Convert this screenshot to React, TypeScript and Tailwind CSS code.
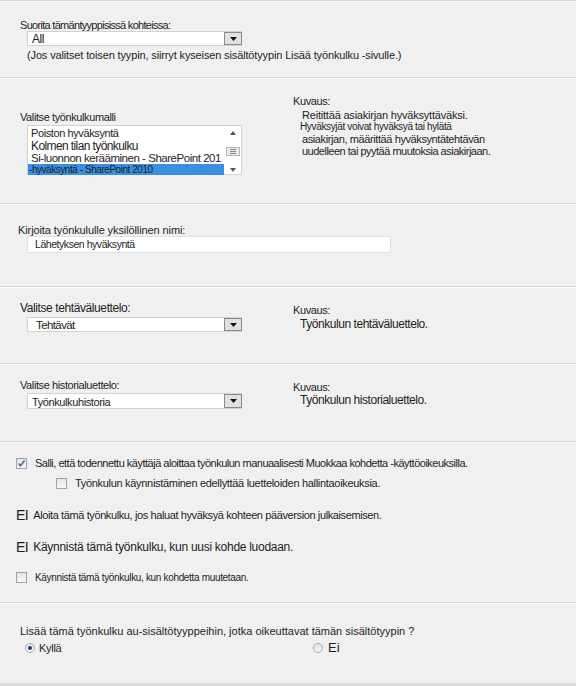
import React from 'react';

const FONT = { fontFamily: '"Liberation Sans", Arial, sans-serif' };

function Arrow() {
  return (
    <div className="flex h-full w-[18px] items-center justify-center border border-[#8a8a8a] bg-[#e1e1e1]">
      <svg width="7" height="4" viewBox="0 0 7 4">
        <path d="M0 0h7L3.5 4z" fill="#111" />
      </svg>
    </div>
  );
}

function Select({ value, textClass, h }: { value: string; textClass: string; h: string }) {
  return (
    <div className={`ml-[7px] flex w-[215px] items-stretch border-l border-t border-b border-[#d2d2d2] bg-white ${h}`}>
      <div className={`flex-1 truncate pl-[4px] text-[#1a1a1a] ${textClass}`}>{value}</div>
      <Arrow />
    </div>
  );
}

function Checkbox({ checked }: { checked?: boolean }) {
  return (
    <span className="flex h-[11px] w-[11px] shrink-0 items-center justify-center border border-[#9aa3ad] bg-gradient-to-b from-[#e6e6e6] to-[#f7f7f7]">
      {checked && (
        <svg width="9" height="9" viewBox="0 0 9 9">
          <path d="M1.5 4.5l2 2.2L7.5 1.5" fill="none" stroke="#4b6a98" strokeWidth="1.6" />
        </svg>
      )}
    </span>
  );
}

function Radio({ checked }: { checked?: boolean }) {
  return (
    <span className="flex h-[10px] w-[10px] shrink-0 items-center justify-center rounded-full border border-[#a4a9b0] bg-gradient-to-b from-[#e2e2e2] to-[#fafafa]">
      {checked && <span className="h-[4px] w-[4px] rounded-full bg-[#1f3f6e]" />}
    </span>
  );
}

function Section({ className, children }: { className: string; children: React.ReactNode }) {
  return (
    <div className={`border-t border-[#d6d6d6] shadow-[inset_0_1px_0_#fbfbfb] ${className}`}>{children}</div>
  );
}

export default function App() {
  return (
    <div className="h-[686px] w-[576px] overflow-hidden bg-[#f0f0f0] text-[#1e1e1e]" style={FONT}>
      {/* content type */}
      <Section className="h-[77px] pl-[20px] pt-[18px]">
        <div className="text-[11px] leading-[12px] tracking-[-0.7px]">Suorita tämäntyyppisissä kohteissa:</div>
        <Select value="All" textClass="text-[12px] leading-[14px] tracking-[-0.4px]" h="h-[15px]" />
        <div className="ml-[7px] mt-[2px] text-[11px] leading-[14px] tracking-[-0.14px]">
          (Jos valitset toisen tyypin, siirryt kyseisen sisältötyypin Lisää työnkulku -sivulle.)
        </div>
      </Section>

      {/* template */}
      <Section className="grid h-[126px] grid-cols-[273px_1fr] pl-[20px]">
        <div className="pt-[33px]">
          <div className="text-[11px] leading-[12px] tracking-[-0.4px]">Valitse työnkulkumalli</div>
          <div className="ml-[7px] mt-[2px] flex h-[50px] w-[215px] border border-[#d2d2d2] bg-white">
            <div className="min-w-0 flex-1 pt-[1px]">
              <div className="pl-[3px] text-[11px] leading-[13px] tracking-[-0.4px]">Poiston hyväksyntä</div>
              <div className="pl-[3px] text-[12px] leading-[12px] tracking-[-0.6px]">Kolmen tilan työnkulku</div>
              <div className="overflow-hidden whitespace-nowrap pl-[3px] text-[11.5px] leading-[12px] tracking-[-0.47px]">Si-luonnon kerääminen - SharePoint 201</div>
              <div className="bg-[#3b8fe0] pl-[1px] text-[10px] leading-[11px] tracking-[-0.45px]">-hyväksyntä - SharePoint 2010</div>
            </div>
            <div className="flex w-[17px] flex-col items-center justify-between pb-[2px] pt-[5px]">
              <svg width="6" height="4" viewBox="0 0 6 4"><path d="M0 4h6L3 0z" fill="#555" /></svg>
              <div className="flex h-[9px] w-[14px] flex-col items-center justify-center gap-[1px] border border-[#b5b5b5] bg-[#ececec]">
                <span className="h-px w-[6px] bg-[#888]" />
                <span className="h-px w-[6px] bg-[#888]" />
                <span className="h-px w-[6px] bg-[#888]" />
              </div>
              <svg width="6" height="4" viewBox="0 0 6 4"><path d="M0 0h6L3 4z" fill="#555" /></svg>
            </div>
          </div>
        </div>
        <div className="pt-[17px]">
          <div className="text-[11px] leading-[12px] tracking-[-0.4px]">Kuvaus:</div>
          <div className="mt-[2px] pl-[9px] text-[11px] leading-[12px] tracking-[-0.2px]">Reitittää asiakirjan hyväksyttäväksi.</div>
          <div className="pl-[7px] text-[10px] leading-[12px] tracking-[-0.35px]">Hyväksyjät voivat hyväksyä tai hylätä</div>
          <div className="pl-[9px] text-[11px] leading-[12px] tracking-[-0.4px]">asiakirjan, määrittää hyväksyntätehtävän</div>
          <div className="pl-[9px] text-[11px] leading-[12px] tracking-[-0.5px]">uudelleen tai pyytää muutoksia asiakirjaan.</div>
        </div>
      </Section>

      {/* name */}
      <Section className="h-[83px] pl-[20px] pt-[20px]">
        <div className="-ml-[2px] text-[11px] leading-[12px] tracking-[-0.1px]">Kirjoita työnkululle yksilöllinen nimi:</div>
        <div className="ml-[7px] flex h-[17px] w-[364px] items-center border border-[#e2e2e2] bg-white pl-[7px] text-[10.5px] tracking-[-0.45px]">
          Lähetyksen hyväksyntä
        </div>
      </Section>

      {/* task list */}
      <Section className="grid h-[77px] grid-cols-[273px_1fr] pl-[20px]">
        <div className="pt-[14px]">
          <div className="text-[12px] leading-[14px] tracking-[-0.4px]">Valitse tehtäväluettelo:</div>
          <div className="mt-[2px]">
            <Select value="Tehtävät" textClass="pl-[8px] text-[11.5px] leading-[15px] tracking-[-0.6px]" h="h-[15px]" />
          </div>
        </div>
        <div className="pt-[17px]">
          <div className="text-[11px] leading-[12px] tracking-[-0.4px]">Kuvaus:</div>
          <div className="mt-[2px] pl-[7px] text-[12px] leading-[12px] tracking-[-0.45px]">Työnkulun tehtäväluettelo.</div>
        </div>
      </Section>

      {/* history list */}
      <Section className="grid h-[78px] grid-cols-[273px_1fr] pl-[20px]">
        <div className="pt-[15px]">
          <div className="text-[11px] leading-[12px] tracking-[-0.4px]">Valitse historialuettelo:</div>
          <div className="mt-[2px]">
            <Select value="Työnkulkuhistoria" textClass="pl-[2px] text-[11px] leading-[16px] tracking-[-0.4px]" h="h-[16px]" />
          </div>
        </div>
        <div className="pt-[17px]">
          <div className="text-[11px] leading-[12px] tracking-[-0.4px]">Kuvaus:</div>
          <div className="mt-[1px] pl-[7px] text-[12px] leading-[12px] tracking-[-0.45px]">Työnkulun historialuettelo.</div>
        </div>
      </Section>

      {/* start options */}
      <Section className="h-[161px] pl-[16px] pt-[14px]">
        <div className="flex h-[14px] items-center gap-[8px]">
          <Checkbox checked />
          <span className="whitespace-nowrap text-[11px] tracking-[-0.5px]">
            Salli, että todennettu käyttäjä aloittaa työnkulun manuaalisesti Muokkaa kohdetta -käyttöoikeuksilla.
          </span>
        </div>
        <div className="ml-[40px] mt-[6px] flex h-[14px] items-center gap-[8px]">
          <Checkbox />
          <span className="whitespace-nowrap text-[11px] tracking-[-0.31px]">Työnkulun käynnistäminen edellyttää luetteloiden hallintaoikeuksia.</span>
        </div>
        <div className="mt-[18px] flex h-[14px] items-center gap-[5px]">
          <span className="text-[14px] leading-[14px] tracking-[-0.5px]">EI</span>
          <span className="whitespace-nowrap text-[11px] tracking-[-0.39px]">
            Aloita tämä työnkulku, jos haluat hyväksyä kohteen pääversion julkaisemisen.
          </span>
        </div>
        <div className="mt-[18px] flex h-[14px] items-center gap-[5px]">
          <span className="text-[14px] leading-[14px] tracking-[-0.5px]">EI</span>
          <span className="whitespace-nowrap text-[12px] tracking-[-0.28px]">Käynnistä tämä työnkulku, kun uusi kohde luodaan.</span>
        </div>
        <div className="mt-[16px] flex h-[14px] items-center gap-[8px]">
          <Checkbox />
          <span className="whitespace-nowrap text-[10px] tracking-[-0.33px]">Käynnistä tämä työnkulku, kun kohdetta muutetaan.</span>
        </div>
      </Section>

      {/* update child types */}
      <Section className="h-[81px] pl-[20px] pt-[22px]">
        <div className="text-[11px] leading-[12px]">
          Lisää tämä työnkulku au-sisältötyyppeihin, jotka oikeuttavat tämän sisältötyypin ?
        </div>
        <div className="mt-[5px] grid grid-cols-[288px_1fr] pl-[5px]">
          <div className="flex items-center gap-[4px]">
            <Radio checked />
            <span className="text-[11px] leading-[12px] tracking-[-0.3px]">Kyllä</span>
          </div>
          <div className="flex items-center gap-[5px]">
            <Radio />
            <span className="text-[13px] leading-[12px]">Ei</span>
          </div>
        </div>
      </Section>
      <div className="h-[3px] bg-[#dedede]" />
    </div>
  );
}
